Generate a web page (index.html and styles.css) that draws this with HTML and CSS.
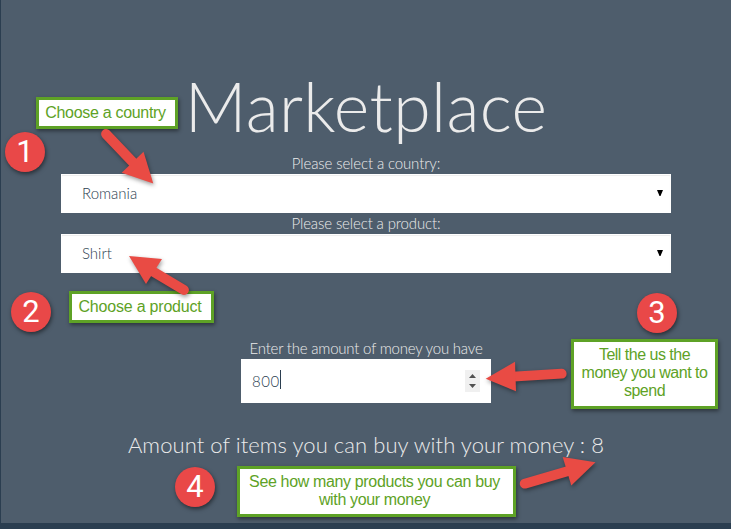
FILE: index.html
```html
<!DOCTYPE html>
<html lang="en">
<head>
<meta charset="utf-8">
<title>Marketplace</title>
<link rel="stylesheet" href="styles.css">
</head>
<body>
<main class="page">
  <h1 class="title"><span>Marketplace</span></h1>
  <form class="form">
    <div class="label first">Please select a country:</div>
    <div class="select"><span>Romania</span><svg width="6" height="6" viewBox="0 0 6 6"><path d="M0 0H6L3.5 6H2.5Z"/></svg></div>
    <div class="label second">Please select a product:</div>
    <div class="select"><span>Shirt</span><svg width="6" height="6" viewBox="0 0 6 6"><path d="M0 0H6L3.5 6H2.5Z"/></svg></div>
    <div class="label third">Enter the amount of money you have</div>
    <div class="amount"><span>800</span><i class="caret"></i><svg class="spin" width="15" height="22" viewBox="0 0 15 22"><path class="spin-bg" d="M0 0H15V22H0Z"/><path d="M4 8L7.5 4L11 8ZM4 14H11L7.5 18Z"/></svg></div>
  </form>
  <p class="result">Amount of items you can buy with your money : 8</p>
</main>
<div class="note note1">Choose a country</div>
<div class="note note2">Choose a product</div>
<div class="note note3">Tell the us the<br>money you want to<br>spend</div>
<div class="note note4">See how many products you can buy<br>with your money</div>
<div class="badge badge1">1</div>
<div class="badge badge2">2</div>
<div class="badge badge3">3</div>
<div class="badge badge4">4</div>
<svg class="arrows" width="731" height="529" viewBox="0 0 731 529">
  <g><path class="shaft" d="M106 134L135 164.500"/><path d="M153.300 183.500L143.500 151.700L121.700 172.700Z"/></g>
  <g><path class="shaft" d="M184 290L153 271.500"/><path d="M129 256L162 259L146 284Z"/></g>
  <g><path class="shaft" d="M561.700 373.700L513 376.600"/><path d="M485.700 378.700L515 361.700L516 391.300Z"/></g>
  <g><path class="shaft" d="M524.700 483.700L570 470.500"/><path d="M595.500 462.300L562.700 457L571.300 485.500Z"/></g>
</svg>
</body>
</html>
```

FILE: styles.css
```css
* { box-sizing: border-box; }
body {
  margin: 0;
  width: 731px;
  height: 529px;
  overflow: hidden;
  position: relative;
  background: #4e5d6c;
  font-family: Lato, sans-serif;
  font-weight: 300;
  color: #ebebeb;
}
.page {
  height: 529px;
  border-left: 1px solid #2b3e50;
  border-bottom: 6px solid #2b3e50;
  padding: 66px 60px 0;
}
.title {
  margin: 0;
  height: 87px;
  line-height: 80px;
  font-size: 68px;
  letter-spacing: .35px;
  font-weight: 300;
  text-align: center;
  white-space: nowrap;
}
.label {
  height: 21px;
  line-height: 20px;
  font-size: 15px;
  letter-spacing: -.13px;
  text-align: center;
}
.second { line-height: 21px; }
.third {
  margin-top: 65px;
  letter-spacing: -.21px;
}
.select {
  display: flex;
  align-items: center;
  justify-content: space-between;
  height: 39px;
  padding: 0 7px 2px 20px;
  background: #fff;
  color: #2b3e50;
  font-size: 15px;
  border: 1px solid #fff;
  box-shadow: inset 0 1px 1px rgba(0, 0, 0, .075);
}
.select svg { fill: #000; }
.amount {
  display: flex;
  align-items: center;
  width: 250px;
  height: 44px;
  margin: 0 auto;
  padding: 0 11px;
  background: #fff;
  color: #2b3e50;
  font-size: 15px;
  letter-spacing: .6px;
}
.caret { width: 1px; height: 19px; margin-top: -3px; background: #2b3e50; }
.spin { margin-left: auto; margin-top: -1px; fill: #505050; }
.spin-bg { fill: #f0f0f0; }
.result {
  margin: 28px 0 0;
  line-height: 27px;
  font-size: 22px;
  letter-spacing: .07px;
  text-align: center;
  white-space: nowrap;
}
.note {
  position: absolute;
  border: 3px solid #5ea226;
  background: #fff;
  color: #5ea226;
  font: 16px/18px "Liberation Sans", sans-serif;
  text-align: center;
  white-space: nowrap;
  padding-top: 4px;
  box-shadow: 1px 2px 4px rgba(0, 0, 0, .45);
}
.note1 { left: 36px; top: 97px; width: 142px; height: 32px; letter-spacing: -.3px; padding-right: 3px; }
.note2 { left: 69px; top: 291px; width: 145px; height: 32px; letter-spacing: -.2px; padding-right: 3px; }
.note3 { left: 571px; top: 339px; width: 147px; height: 70px; letter-spacing: -.5px; }
.note4 { left: 237px; top: 466px; width: 279px; height: 51px; letter-spacing: -.35px; padding-right: 4px; }
.badge {
  position: absolute;
  width: 40px;
  height: 40px;
  border-radius: 50%;
  background: #e94848;
  color: #fff;
  font: 31px/39px Roboto, sans-serif;
  text-align: center;
  box-shadow: 1px 2px 4px rgba(0, 0, 0, .5);
}
.badge1 { left: 5px; top: 132px; }
.badge2 { left: 11px; top: 292px; }
.badge3 { left: 637px; top: 293px; }
.badge4 { left: 175px; top: 467px; }
.arrows {
  position: absolute;
  left: 0;
  top: 0;
  fill: #e94b44;
}
.arrows g { filter: drop-shadow(1px 2px 2px rgba(0, 0, 0, .4)); }
.shaft { stroke: #e94b44; stroke-width: 9.800px; stroke-linecap: round; }
```
